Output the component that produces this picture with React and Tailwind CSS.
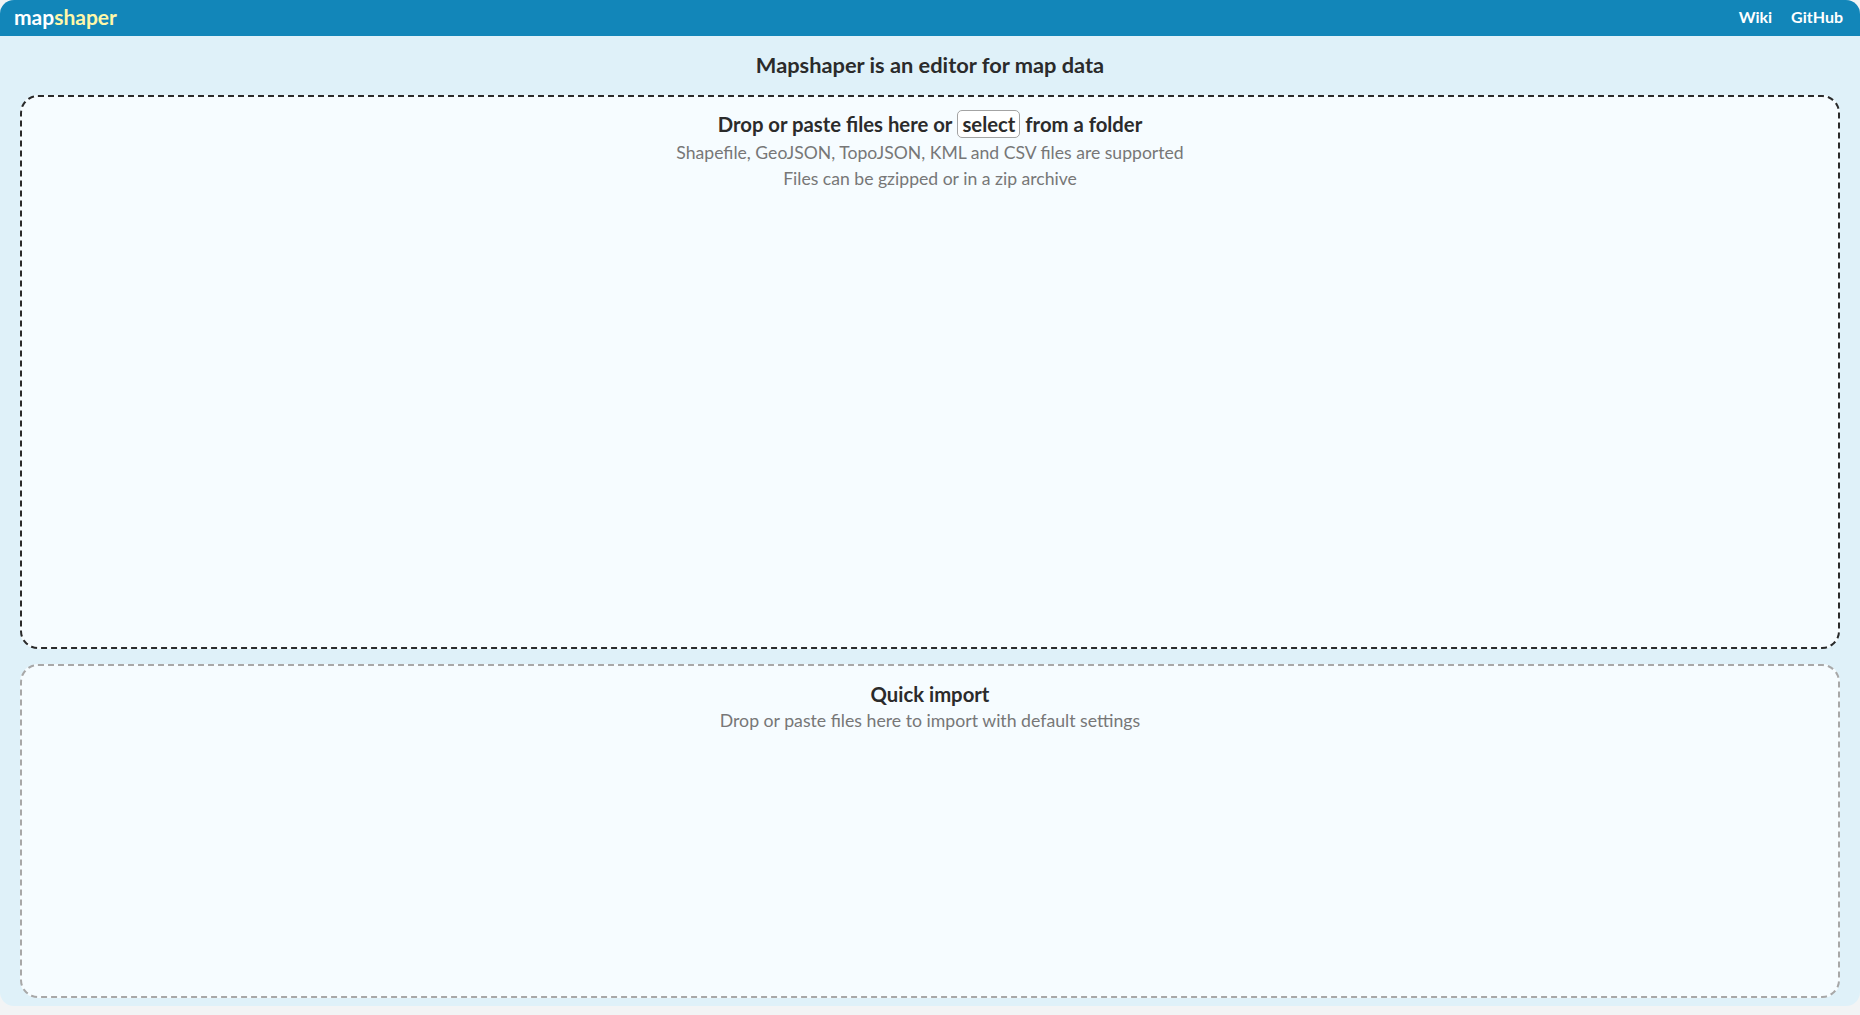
import React from "react";

const font = { fontFamily: '"Source Sans Pro", Lato, "Noto Sans", sans-serif' };

const App = () => {
  return (
    <div className="w-[1860px] h-[1015px] bg-[#f2f4f5]" style={font}>
      <div className="h-[1006px] flex flex-col rounded-[14px] overflow-hidden bg-[#dff1f9]">
        <header className="h-[36px] shrink-0 bg-[#1286b9] flex items-center justify-between px-[14px] pb-[3px]">
          <div className="text-[21px] font-bold leading-none">
            <span className="text-white">map</span>
            <span className="text-[#fff7a8]">shaper</span>
          </div>
          <nav className="flex gap-[19px] text-[16px] font-bold text-white pr-[3px]">
            <span>Wiki</span>
            <span>GitHub</span>
          </nav>
        </header>

        <main className="flex-1 flex flex-col px-[20px] pb-[8px]">
          <h1 className="text-center text-[21.8px] font-bold text-[#2b2b2b] h-[59px] flex items-center justify-center">
            Mapshaper is an editor for map data
          </h1>

          <section className="h-[554px] border-2 border-dashed border-[#2a2a2a] rounded-[18px] bg-[#f6fcff] flex flex-col items-center pt-[12px]">
            <div className="text-[20.3px] font-bold text-[#2b2b2b] flex items-center gap-[5px]">
              <span>Drop or paste files here or</span>
              <span className="border border-[#a3a3a3] rounded-[5px] px-[4px] leading-[26px] bg-white">select</span>
              <span>from a folder</span>
            </div>
            <p className="text-[17.6px] text-[#777] leading-[26px] mt-[1px]">
              Shapefile, GeoJSON, TopoJSON, KML and CSV files are supported
            </p>
            <p className="text-[17.6px] text-[#777] leading-[26px]">
              Files can be gzipped or in a zip archive
            </p>
          </section>

          <section className="mt-[15px] flex-1 border-2 border-dashed border-[#a8a8a8] rounded-[18px] bg-[#f6fcff] flex flex-col items-center pt-[15px]">
            <div className="text-[20.3px] font-bold text-[#2b2b2b] leading-[26px]">Quick import</div>
            <p className="text-[17.7px] text-[#777] leading-[26px] mt-[1px]">
              Drop or paste files here to import with default settings
            </p>
          </section>
        </main>
      </div>
    </div>
  );
};

export default App;
